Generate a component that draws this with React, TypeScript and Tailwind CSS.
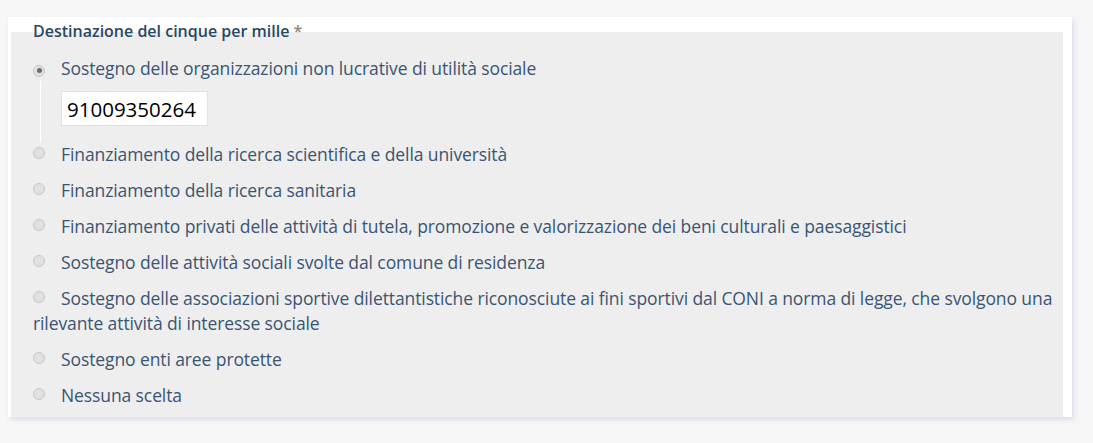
import type { ReactNode } from "react";

const options: ReadonlyArray<string> = [
  "Sostegno delle organizzazioni non lucrative di utilità sociale",
  "Finanziamento della ricerca scientifica e della università",
  "Finanziamento della ricerca sanitaria",
  "Finanziamento privati delle attività di tutela, promozione e valorizzazione dei beni culturali e paesaggistici",
  "Sostegno delle attività sociali svolte dal comune di residenza",
  "Sostegno delle associazioni sportive dilettantistiche riconosciute ai fini sportivi dal CONI a norma di legge, che svolgono una rilevante attività di interesse sociale",
  "Sostegno enti aree protette",
  "Nessuna scelta",
];

function Radio({ checked }: { readonly checked: boolean }) {
  return (
    <span className="mr-[16px] inline-flex h-[12px] w-[12px] items-center justify-center rounded-full border border-[#c6c6c6] bg-[#e1e1e1] align-[2px]">
      {checked ? <span className="h-[5px] w-[5px] rounded-full bg-[#6a6a6a]" /> : null}
    </span>
  );
}

function Option({ checked, children }: { readonly checked: boolean; readonly children: ReactNode }) {
  return (
    <label className="block text-[17.5px] leading-[25px] tracking-[-0.1px] text-[#3a5573]">
      <Radio checked={checked} />
      {children}
    </label>
  );
}

export default function App() {
  return (
    <div className="min-h-[443px] bg-[#f7f7f7] pl-[8px] pt-[17px] font-['Open_Sans',sans-serif]">
      <div className="w-[1064px] bg-white pl-[3px] pr-[9px] pt-[15px] shadow-[2px_3px_5px_rgba(190,190,230,0.45)]">
        <div className="flow-root h-[385px] bg-[#eeeeee] pl-[22px] pr-[4px]">
          <div className="-mt-[10px] text-[16px] font-semibold leading-[18px] text-[#294863]">
            Destinazione del cinque per mille <span className="text-[#8a8a8a]">*</span>
          </div>

          <div className="mt-[16px]">
            <Option checked>{options[0]}</Option>
            <div className="ml-[7px] border-l border-white pb-[16px] pl-[20px] pt-[10px]">
              <input
                className="h-[35px] w-[147px] border border-[#e2e2e2] bg-white px-[5px] text-[20.5px] text-black outline-none"
                defaultValue="91009350264"
                type="text"
              />
            </div>
            <div className="space-y-[11px]">
              {options.slice(1).map((option) => (
                <Option checked={false} key={option}>
                  {option}
                </Option>
              ))}
            </div>
          </div>
        </div>
      </div>
    </div>
  );
}
